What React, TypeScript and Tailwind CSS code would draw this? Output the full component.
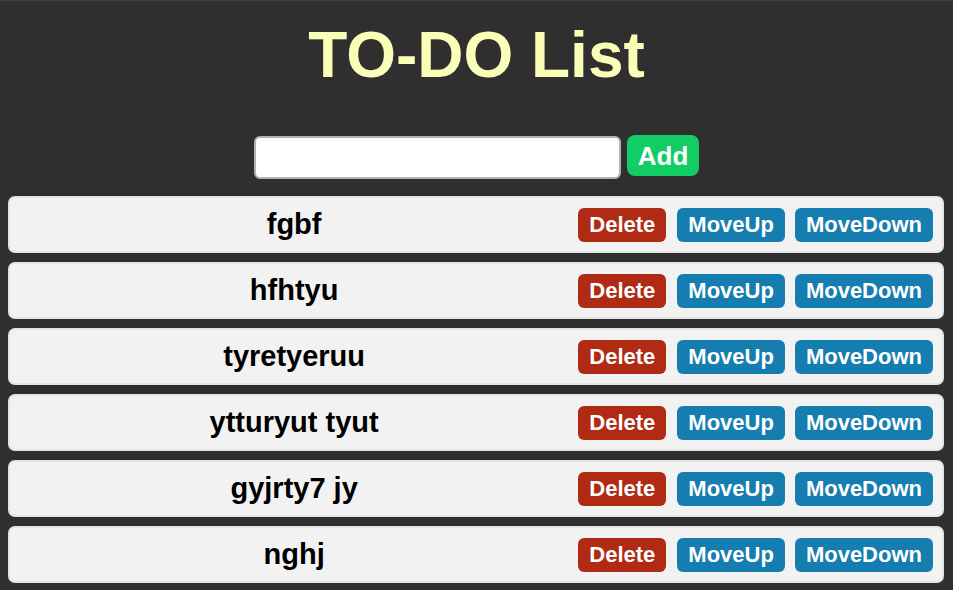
import { useState } from "react";

type Todo = { id: number; text: string };

const INITIAL: Todo[] = [
  { id: 1, text: "fgbf" },
  { id: 2, text: "hfhtyu" },
  { id: 3, text: "tyretyeruu" },
  { id: 4, text: "ytturyut tyut" },
  { id: 5, text: "gyjrty7 jy" },
  { id: 6, text: "nghj" },
];

export default function App() {
  const [todos, setTodos] = useState<Todo[]>(INITIAL);
  const [value, setValue] = useState("");

  const add = () => {
    if (!value.trim()) return;
    setTodos([...todos, { id: Date.now(), text: value }]);
    setValue("");
  };

  const move = (i: number, dir: number) => {
    const j = i + dir;
    if (j < 0 || j >= todos.length) return;
    const next = [...todos];
    [next[i], next[j]] = [next[j], next[i]];
    setTodos(next);
  };

  return (
    <div className="min-h-screen bg-[#2f2f2f] border-t border-[#3d4247] px-2 pb-4 font-['Liberation_Sans',Arial,sans-serif]">
      <h1 className="mt-[17px] text-center text-[64px] leading-[74px] font-bold text-[#faffb8]">
        TO-DO List
      </h1>
      <div className="mt-[43px] flex justify-center items-start gap-[6px]">
        <input
          className="mt-[1px] w-[367px] h-[43px] bg-white border-2 border-[#b4b0b4] rounded-[6px] px-2 text-xl outline-none"
          value={value}
          onChange={(e) => setValue(e.target.value)}
        />
        <button
          className="h-[41px] px-[11px] rounded-[8px] bg-[#12cd66] text-white text-[26px] font-bold leading-none"
          onClick={add}
        >
          Add
        </button>
      </div>
      <ul className="mt-[17px] flex flex-col gap-[9px]">
        {todos.map((todo, i) => (
          <li
            key={todo.id}
            className="h-[57px] flex items-center bg-[#f2f2f2] border-2 border-[#e4e4e4] rounded-[7px] mr-[1px] pr-[9px]"
          >
            <span className="flex-1 text-center text-[29px] font-bold text-black">
              {todo.text}
            </span>
            <button
              className="h-[34px] px-[11px] rounded-[6px] bg-[#b02a14] text-white text-[22px] font-bold leading-none"
              onClick={() => setTodos(todos.filter((t) => t.id !== todo.id))}
            >
              Delete
            </button>
            <button
              className="ml-[11px] h-[34px] px-[11px] rounded-[6px] bg-[#167db0] text-white text-[22px] font-bold leading-none"
              onClick={() => move(i, -1)}
            >
              MoveUp
            </button>
            <button
              className="ml-[10px] h-[34px] px-[11px] rounded-[6px] bg-[#167db0] text-white text-[22px] font-bold leading-none"
              onClick={() => move(i, 1)}
            >
              MoveDown
            </button>
          </li>
        ))}
      </ul>
    </div>
  );
}
